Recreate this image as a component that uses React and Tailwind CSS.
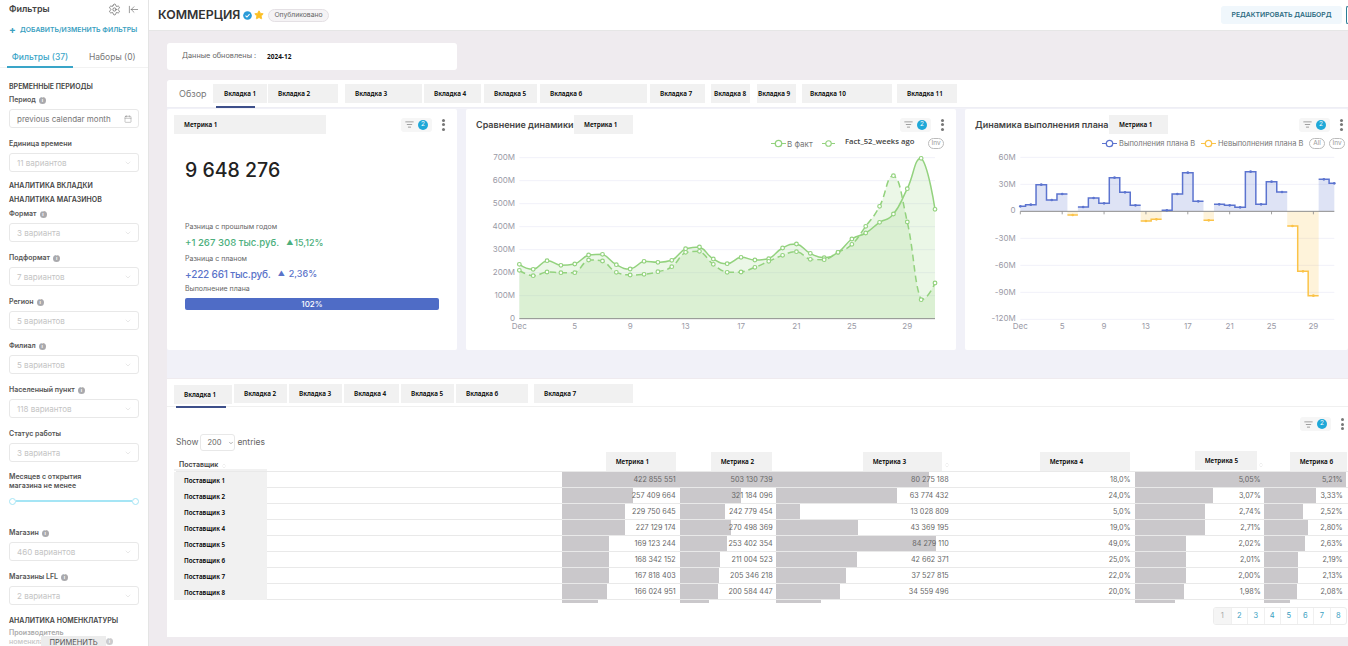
import React from "react";
import { Settings, ArrowLeftToLine, ListFilter, Calendar, ChevronDown, Star, ChevronsUpDown } from "lucide-react";

const Info = () => (
  <span className="inline-flex w-[7px] h-[7px] rounded-full bg-[#a9a9ad] text-white text-[5px] leading-none font-bold items-center justify-center ml-[3px] shrink-0">i</span>
);

const Label = ({ children, info = true }) => (
  <div className="h-[10px] mb-[4px] flex items-center text-[7px] font-semibold text-[#555]">{children}{info && <Info />}</div>
);

const Select = ({ text, mb = "mb-[11px]" }) => (
  <div className={`h-[19px] ${mb} border border-[#e8e8e8] rounded-[3px] flex items-center justify-between pl-[7px] pr-[6px] text-[8px] text-[#c4c4c4]`}>
    <span>{text}</span>
    <ChevronDown size={8} strokeWidth={1.2} color="#c8c8c8" />
  </div>
);

const Section = ({ children, className = "" }) => (
  <div className={`text-[7px] font-semibold text-[#444] ${className}`}>{children}</div>
);

const Chip = () => (
  <div className="w-[31px] h-[14px] rounded-[3px] bg-[#f6f6f6] flex items-center justify-center gap-[4px]">
    <ListFilter size={9} strokeWidth={1.6} color="#666" />
    <span className="w-[10px] h-[10px] rounded-full bg-[#1fa8d8] text-white text-[6.5px] flex items-center justify-center">2</span>
  </div>
);

const Kebab = () => (
  <div className="flex flex-col gap-[1.5px] w-[3px]">
    <span className="w-[3px] h-[3px] rounded-full bg-[#777]" />
    <span className="w-[3px] h-[3px] rounded-full bg-[#777]" />
    <span className="w-[3px] h-[3px] rounded-full bg-[#777]" />
  </div>
);

const Tag = ({ children, className = "" }) => (
  <div className={`h-[19px] pt-[1.5px] bg-[#f1f1f1] flex items-center text-[6.4px] font-semibold text-[#000] shrink-0 font-['Noto_Sans'] ${className}`}>{children}</div>
);

const Pill = ({ children, className = "" }) => (
  <span className={`h-[11px] w-[16px] rounded-full border border-[#bbb] text-[#999] text-[6.5px] flex items-center justify-center ${className}`}>{children}</span>
);

const Marker = ({ color, w = 15 }) => (
  <svg width={w} height="9" viewBox="0 0 15 9" className="shrink-0">
    <line x1="0" y1="4.5" x2="15" y2="4.5" stroke={color} strokeWidth="1.2" />
    <circle cx="7.5" cy="4.5" r="3.2" fill="#fff" stroke={color} strokeWidth="1.3" />
  </svg>
);

function clamp(v, a, b) {
  return Math.min(Math.max(a, b), Math.max(Math.min(a, b), v));
}

function smooth(pts) {
  const s = 0.5;
  const cps = pts.map((p, i) => {
    if (i === 0 || i === pts.length - 1) return { in: p, out: p };
    const prev = pts[i - 1], next = pts[i + 1];
    const dx = (next[0] - prev[0]) * s * 0.5;
    const dy = (next[1] - prev[1]) * s * 0.5;
    return {
      in: [p[0] - dx, clamp(p[1] - dy, prev[1], p[1])],
      out: [p[0] + dx, clamp(p[1] + dy, next[1], p[1])],
    };
  });
  let d = `M${pts[0][0]},${pts[0][1]}`;
  for (let i = 0; i < pts.length - 1; i++) {
    d += ` C${cps[i].out[0]},${cps[i].out[1]} ${cps[i + 1].in[0]},${cps[i + 1].in[1]} ${pts[i + 1][0]},${pts[i + 1][1]}`;
  }
  return d;
}

const factY = [478,493,467,481,477,450,448,479,492,469,472,466,431,426,462,476,457,465,461,429,417,445,458,442,402,384,352,327,251,160,313];
const prevY = [496,512,501,503,503,465,468,502,510,508,500,485,442,439,478,502,501,487,469,451,440,463,464,442,418,364,304,212,351,584,534];

const LineChart = () => {
  const x0 = 160, step = 1247 / 30, base = 641;
  const fact = factY.map((y, i) => [x0 + i * step, y]);
  const prev = prevY.map((y, i) => [x0 + i * step, y]);
  const close = ` L1407,${base} L160,${base} Z`;
  const ticks = [["700M",158],["600M",227],["500M",296],["400M",365],["300M",434],["200M",503],["100M",572],["0",641]];
  const xl = [["Dec",0],["5",4],["9",8],["13",12],["17",16],["21",20],["25",24],["29",28]];
  return (
    <svg width="490" height="185" viewBox="0 135 1470 555" className="block" fontFamily="Inter" fontSize="24" fill="#9a9aa6">
      {ticks.slice(0, 7).map(([t, y]) => <line key={t} x1="160" x2="1407" y1={y} y2={y} stroke="#f1f1f9" strokeWidth="3" />)}
      <path d={smooth(fact) + close} fill="#9bd585" fillOpacity="0.2" />
      <path d={smooth(prev) + close} fill="#9bd585" fillOpacity="0.2" />
      <line x1="160" x2="1407" y1={base} y2={base} stroke="#8d8d8d" strokeWidth="3" />
      <path d={smooth(fact)} fill="none" stroke="#93d27e" strokeWidth="4.5" />
      <path d={smooth(prev)} fill="none" stroke="#93d27e" strokeWidth="4.5" strokeDasharray="20 12" />
      {fact.map(([x, y], i) => <circle key={i} cx={x} cy={y} r="5.5" fill="#fff" stroke="#93d27e" strokeWidth="3.5" />)}
      {prev.map(([x, y], i) => <circle key={i} cx={x} cy={y} r="5.5" fill="#fff" stroke="#93d27e" strokeWidth="3.5" />)}
      {ticks.map(([t, y]) => <text key={t} x="147" y={y + 8} textAnchor="end">{t}</text>)}
      {xl.map(([t, i]) => <text key={t} x={x0 + i * step} y="673" textAnchor="middle">{t}</text>)}
    </svg>
  );
};

const stepVals = [
  ["b",304],["b",299],["b",239],["b",285],["b",267],["o",330],["b",306],["b",279],["b",295],["b",218],["b",262],["b",301],
  ["o",348],["o",343],["b",316],["b",267],["b",203],["b",289],["o",346],["b",298],["b",301],["b",307],["b",200],["b",298],
  ["b",230],["b",261],["o",363],["o",499],["o",572],["b",223],["b",235],
];

const StepChart = () => {
  const x0 = 166, step = 31.4, base = 319, right = 1108;
  const pts = stepVals.map(([s, y], i) => ({ s, y, x: x0 + i * step, a: Math.max(x0, x0 + (i - 0.5) * step), b: Math.min(right, x0 + (i + 0.5) * step) }));
  const paths = [];
  pts.forEach((p, i) => {
    if (i > 0 && pts[i - 1].s === p.s) {
      const last = paths[paths.length - 1];
      last.d += ` L${p.a},${p.y} L${p.b},${p.y}`;
      last.items.push(p);
    } else {
      paths.push({ s: p.s, d: `M${p.a},${p.y} L${p.b},${p.y}`, items: [p] });
    }
  });
  const col = { b: "#5c74cf", o: "#fbc348" };
  const grid = [["60M",157],["30M",238],["-30M",400],["-60M",481],["-90M",562],["-120M",643]];
  const xl = [["Dec",0],["5",4],["9",8],["13",12],["17",16],["21",20],["25",24],["29",28]];
  return (
    <svg width="383" height="185" viewBox="0 135 1149 555" className="block" fontFamily="Inter" fontSize="24" fill="#9a9aa6">
      {grid.map(([t, y]) => <line key={t} x1="166" x2={right} y1={y} y2={y} stroke="#f1f1f9" strokeWidth="3" />)}
      {paths.map((p, i) => {
        const f = p.items[0], l = p.items[p.items.length - 1];
        return <path key={i} d={`${p.d} L${l.b},${base} L${f.a},${base} Z`} fill={col[p.s]} fillOpacity="0.2" />;
      })}
      <line x1="166" x2={right} y1={base} y2={base} stroke="#8d8d8d" strokeWidth="3" />
      {xl.map(([t, i]) => <line key={t} x1={x0 + i * step} x2={x0 + i * step} y1={base} y2={base + 9} stroke="#8d8d8d" strokeWidth="2.5" />)}
      {paths.map((p, i) => <path key={i} d={p.d} fill="none" stroke={col[p.s]} strokeWidth="4.5" />)}
      {pts.map((p, i) => <circle key={i} cx={p.x} cy={p.y} r="4" fill={col[p.s]} />)}
      <text x="152" y="165" textAnchor="end">60M</text>
      <text x="152" y="246" textAnchor="end">30M</text>
      <text x="152" y="325" textAnchor="end">0</text>
      <text x="152" y="408" textAnchor="end">-30M</text>
      <text x="152" y="489" textAnchor="end">-60M</text>
      <text x="152" y="570" textAnchor="end">-90M</text>
      <text x="152" y="649" textAnchor="end">-120M</text>
      {xl.map(([t, i]) => <text key={t} x={x0 + i * step} y="673" textAnchor="middle">{t}</text>)}
    </svg>
  );
};

const topTabs = [
  ["Вкладка 2", "w-[70px] ml-[1px] pl-[10px]"],
  ["Вкладка 3", "w-[77px] ml-[7px] pl-[10px]"],
  ["Вкладка 4", "w-[57px] ml-[2px] pl-[10px]"],
  ["Вкладка 5", "w-[53px] ml-[3px] pl-[10px]"],
  ["Вкладка 6", "w-[107px] ml-[3px] pl-[10px]"],
  ["Вкладка 7", "w-[55px] ml-[3px] pl-[10px]"],
  ["Вкладка 8", "w-[39px] ml-[6px] pl-[3px]"],
  ["Вкладка 9", "w-[39px] ml-[7px] pl-[1px]"],
  ["Вкладка 10", "w-[90px] ml-[6px] pl-[8px]"],
  ["Вкладка 11", "w-[60px] ml-[5px] pl-[10px]"],
];

const bottomTabs = [
  ["Вкладка 2", "w-[53px] ml-[2px] pl-[10px]"],
  ["Вкладка 3", "w-[53px] ml-[2px] pl-[10px]"],
  ["Вкладка 4", "w-[55px] ml-[2px] pl-[10px]"],
  ["Вкладка 5", "w-[53px] ml-[2px] pl-[10px]"],
  ["Вкладка 6", "w-[72px] ml-[2px] pl-[10px]"],
  ["Вкладка 7", "w-[99px] ml-[6px] pl-[10px]"],
];

const cols = [
  { w: "w-[118px]", pr: "pr-[4px]" },
  { w: "w-[96px]", pr: "pr-[3px]" },
  { w: "w-[174px]", pr: "pr-[1px]" },
  { w: "w-[185px]", pr: "pr-[4px]" },
  { w: "w-[129px]", pr: "pr-[3px]" },
  { w: "w-[83px]", pr: "pr-[4px]" },
];

const rows = [
  ["Поставщик 1", ["422 855 551","503 130 739","80 275 188","18,0%","5,05%","5,21%"], [118,96,153,0,129,82]],
  ["Поставщик 2", ["257 409 664","321 184 096","63 774 432","24,0%","3,07%","3,33%"], [71,61,121,0,78,52]],
  ["Поставщик 3", ["229 750 645","242 779 454","13 028 809","5,0%","2,74%","2,52%"], [63,45,24,0,70,39]],
  ["Поставщик 4", ["227 129 174","270 498 369","43 369 195","19,0%","2,71%","2,80%"], [63,51,82,0,70,44]],
  ["Поставщик 5", ["169 123 244","253 402 354","84 279 110","49,0%","2,02%","2,63%"], [47,47,160,0,51,41]],
  ["Поставщик 6", ["168 342 152","211 004 523","42 662 371","25,0%","2,01%","2,19%"], [47,40,81,0,51,34]],
  ["Поставщик 7", ["167 818 403","205 346 218","37 527 815","22,0%","2,00%","2,13%"], [47,39,70,0,51,34]],
  ["Поставщик 8", ["166 024 951","200 584 447","34 559 496","20,0%","1,98%","2,08%"], [45,38,64,0,49,33]],
];
const partial = [36, 29, 45, 0, 40, 26];

const headers = [
  ["Метрика 1", "w-[70px] mr-[4px] mt-[1px]", false],
  ["Метрика 2", "w-[61px] mr-[4px] mt-[1px]", false],
  ["Метрика 3", "w-[79px] mr-[8px] mt-[1px]", true],
  ["Метрика 4", "w-[90px] mr-[5px] mt-[1px]", false],
  ["Метрика 5", "w-[62px] mr-[7px]", true],
  ["Метрика 6", "w-[57px] mr-0 mt-[1px]", false],
];

const Sort = ({ className = "" }) => <ChevronsUpDown size={6} strokeWidth={1.5} color="#d4d4d4" className={className} />;

export default function App() {
  return (
    <div className="w-[1348px] h-[646px] overflow-hidden flex bg-[#efebef] font-['Inter'] text-[#444]">
      {/* Sidebar */}
      <aside className="relative w-[149px] h-full shrink-0 bg-white border-r border-[#e4e4e4] overflow-hidden">
        <div className="h-[16px] pt-[2px] pl-[9px] pr-[9px] flex items-center justify-between">
          <span className="text-[9px] font-semibold text-[#444]">Фильтры</span>
          <span className="flex items-center gap-[7px] mt-[1px]">
            <Settings size={13} strokeWidth={1.4} color="#666" />
            <ArrowLeftToLine size={11} strokeWidth={1.4} color="#666" />
          </span>
        </div>
        <div className="mt-[8px] h-[12px] pl-[9px] flex items-center text-[6.8px] font-semibold text-[#3aa0bf]">
          <span className="text-[10px] font-bold w-[11px] leading-none -mt-[2px]">+</span>
          <span>ДОБАВИТЬ/ИЗМЕНИТЬ ФИЛЬТРЫ</span>
        </div>
        <div className="mt-[9px] h-[23px] border-b border-[#f2f2f2] flex text-[8.5px]">
          <div className="w-[66px] ml-[7px] text-center pt-[6px] border-b-2 border-[#3aa5c8] h-[23px] text-[#3aa5c8] font-medium">Фильтры (37)</div>
          <div className="ml-[16px] pt-[6px] text-[#777]">Наборы (0)</div>
        </div>
        <div className="px-[9px] pt-[14px]">
          <Section className="h-[10px] leading-[10px] mb-[3px]">ВРЕМЕННЫЕ ПЕРИОДЫ</Section>
          <Label>Период</Label>
          <div className="h-[19px] mb-[11px] border border-[#e8e8e8] rounded-[3px] flex items-center justify-between pl-[7px] pr-[6px] text-[8px] text-[#777]">
            <span>previous calendar month</span>
            <Calendar size={8} strokeWidth={1.2} color="#777" />
          </div>
          <Label info={false}>Единица времени</Label>
          <Select text="11 вариантов" />
          <Section className="h-[10px] leading-[10px] mb-[4px] mt-[-2px]">АНАЛИТИКА ВКЛАДКИ</Section>
          <Section className="h-[10px] leading-[10px] mb-[4px]">АНАЛИТИКА МАГАЗИНОВ</Section>
          <Label>Формат</Label>
          <Select text="3 варианта" />
          <Label>Подформат</Label>
          <Select text="7 вариантов" />
          <Label>Регион</Label>
          <Select text="5 вариантов" />
          <Label>Филиал</Label>
          <Select text="5 вариантов" />
          <Label>Населенный пункт</Label>
          <Select text="118 вариантов" />
          <Label info={false}>Статус работы</Label>
          <Select text="3 варианта" />
          <div className="-mt-[1px] text-[7px] leading-[9px] font-semibold text-[#555] mb-[7px]">Месяцев с открытия<br />магазина не менее</div>
          <div className="flex items-center h-[8px] mb-[23px]">
            <span className="w-[7px] h-[7px] rounded-full border border-[#a5e5f5] bg-white shrink-0" />
            <span className="flex-1 h-[2px] bg-[#a5e5f5]" />
            <span className="w-[7px] h-[7px] rounded-full border border-[#a5e5f5] bg-white shrink-0" />
          </div>
          <Label>Магазин</Label>
          <Select text="460 вариантов" />
          <Label>Магазины LFL</Label>
          <Select text="2 варианта" />
          <Section className="h-[10px] leading-[10px] mb-[2px]">АНАЛИТИКА НОМЕНКЛАТУРЫ</Section>
          <div className="text-[7px] leading-[9px] font-semibold text-[#aaa]">Производитель</div>
          <div className="w-[104px] text-[7px] leading-[9px] font-semibold text-[#ccc] flex items-center justify-between">номенклатуры<span className="opacity-60 flex"><Info /></span></div>
        </div>
        <div className="absolute left-[41px] top-[636px] w-[65px] h-[14px] bg-[#ececec] text-[7.5px] text-[#555] flex items-center justify-center">ПРИМЕНИТЬ</div>
      </aside>

      {/* Main */}
      <main className="flex-1 min-w-0 flex flex-col">
        <header className="h-[31px] shrink-0 bg-white border-b border-[#e6e6e6] flex items-center pl-[9px]">
          <h1 className="w-[81px] text-[12.3px] font-semibold text-[#333] leading-none whitespace-nowrap">КОММЕРЦИЯ</h1>
          <svg width="9" height="9" viewBox="0 0 10 10" className="ml-[4px]">
            <circle cx="5" cy="5" r="4.8" fill="#2a9bd8" />
            <path d="M2.8 5.1 L4.4 6.7 L7.3 3.6" fill="none" stroke="#fff" strokeWidth="1.2" />
          </svg>
          <Star size={10} fill="#fbbf24" color="#fbbf24" className="ml-[2px]" />
          <span className="ml-[4px] h-[13px] w-[61px] rounded-full border border-[#e4e0e4] bg-[#f5f3f5] text-[#666] text-[6.8px] flex items-center justify-center">Опубликовано</span>
          <div className="ml-auto flex items-center">
            <span className="w-[121px] h-[18px] rounded-[3px] bg-[#f0f7fc] text-[#2c6b82] text-[6.8px] font-semibold flex items-center justify-center">РЕДАКТИРОВАТЬ ДАШБОРД</span>
            <span className="ml-[4px] w-[2px] h-[18px] border-l border-y border-[#2c7d96] rounded-l-[3px]" />
          </div>
        </header>

        <div className="flex-1 min-h-0 pl-[18px]">
          <div className="mt-[12px] w-[290px] h-[27px] bg-white rounded-[3px] flex items-center pl-[15px]">
            <span className="text-[7.3px] text-[#666] w-[85px]">Данные обновлены :</span>
            <span className="text-[6.5px] font-bold text-[#111] font-['Noto_Sans']">2024-12</span>
          </div>

          <section className="mt-[10px] h-[298px] bg-[#f1f1f8] rounded-tl-[3px] overflow-hidden">
            <div className="h-[28px] bg-white border-b border-[#eeeef4] flex pl-[12px] pt-[4px]">
              <span className="w-[34px] text-[9px] text-[#777] h-[19px] flex items-center">Обзор</span>
              <Tag className="relative w-[54px] pl-[11px] overflow-visible">
                Вкладка 1
                <span className="absolute left-[3px] top-[22px] w-[39px] h-[2px] bg-[#3d4f8a]" />
              </Tag>
              {topTabs.map(([t, c]) => <Tag key={t} className={c}>{t}</Tag>)}
            </div>
            <div className="flex gap-[9px] pt-[1px] h-[242px]">
              {/* Card 1 */}
              <div className="w-[290px] h-[241px] bg-white rounded-[2px] shrink-0 pt-[6px] pl-[7px]">
                <div className="flex items-center h-[19px]">
                  <Tag className="w-[152px] pl-[10px]">Метрика 1</Tag>
                  <div className="ml-[75px]"><Chip /></div>
                  <div className="ml-[10px]"><Kebab /></div>
                </div>
                <div className="pl-[11px]">
                  <div className="mt-[23px] text-[19.5px] leading-[26px] font-medium text-[#222]">9 648 276</div>
                  <div className="mt-[39px] text-[7px] leading-[10px] text-[#666]">Разница с прошлым годом</div>
                  <div className="mt-[4px] text-[9.6px] leading-[14px] font-medium text-[#4caf7d] flex">
                    <span>+1 267 308 тыс.руб.</span><span className="ml-[7px] text-[7px] self-center">▲</span><span className="ml-[1px] text-[9px]">15,12%</span>
                  </div>
                  <div className="mt-[4px] text-[7px] leading-[10px] text-[#666]">Разница с планом</div>
                  <div className="mt-[3px] text-[10px] leading-[14px] font-medium text-[#5a73c9] flex">
                    <span className="tracking-[-0.2px]">+222 661 тыс.руб.</span><span className="ml-[7px] text-[7px] self-center">▲</span><span className="ml-[4px] text-[9px]">2,36%</span>
                  </div>
                  <div className="mt-[3px] text-[7px] leading-[10px] text-[#666]">Выполнение плана</div>
                  <div className="mt-[4px] w-[254px] h-[12px] rounded-[2px] bg-[#4f6cc6] text-white text-[8px] font-medium flex items-center justify-center">102%</div>
                </div>
              </div>
              {/* Card 2 */}
              <div className="w-[490px] h-[241px] bg-white rounded-[2px] shrink-0 pt-[6px]">
                <div className="flex items-center h-[19px] pl-[10px]">
                  <span className="w-[98px] text-[9px] font-semibold text-[#444] whitespace-nowrap">Сравнение динамики</span>
                  <Tag className="w-[59px] pl-[10px]">Метрика 1</Tag>
                  <div className="ml-[267px]"><Chip /></div>
                  <div className="ml-[10px]"><Kebab /></div>
                </div>
                <div className="mt-[3px] h-[13px] flex items-center text-[8px] text-[#777]">
                  <span className="ml-[305px]"><Marker color="#93d27e" /></span>
                  <span className="ml-[1px] w-[35px]">В факт</span>
                  <Marker color="#93d27e" w={13} />
                  <span className="ml-[10px] w-[83px] -mt-[3px] font-['Open_Sans'] text-[7.7px] font-semibold text-[#444] whitespace-nowrap">Fact_52_weeks ago</span>
                  <Pill>Inv</Pill>
                </div>
                <LineChart />
              </div>
              {/* Card 3 */}
              <div className="flex-1 min-w-0 h-[241px] bg-white rounded-[2px] pt-[6px]">
                <div className="flex items-center h-[19px] pl-[10px]">
                  <span className="w-[134px] text-[9px] font-semibold text-[#444] whitespace-nowrap">Динамика выполнения плана</span>
                  <Tag className="w-[59px] pl-[10px]">Метрика 1</Tag>
                  <div className="ml-[131px]"><Chip /></div>
                  <div className="ml-[10px]"><Kebab /></div>
                </div>
                <div className="mt-[3px] h-[13px] flex items-center text-[7.5px] text-[#777]">
                  <span className="ml-[137px]"><Marker color="#5c74cf" /></span>
                  <span className="ml-[2px] w-[82px] whitespace-nowrap">Выполнения плана В</span>
                  <Marker color="#fbc348" />
                  <span className="ml-[2px] w-[91px] whitespace-nowrap">Невыполнения плана В</span>
                  <Pill className="w-[14px]">All</Pill>
                  <Pill className="ml-[4px]">Inv</Pill>
                </div>
                <StepChart />
              </div>
            </div>
          </section>

          <section className="mt-[1px] h-[258px] bg-white pt-[5px]">
            <div className="h-[23px] pl-[7px] flex border-b border-[#f0f0f0]">
              <Tag className="relative w-[58px] pl-[10px] mt-[1px]">
                Вкладка 1
                <span className="absolute left-[2px] top-[21px] w-[50px] h-[2px] bg-[#3d4f8a]" />
              </Tag>
              {bottomTabs.map(([t, c]) => <Tag key={t} className={c}>{t}</Tag>)}
            </div>
            <div className="mt-[10px] h-[14px] pr-[4px] flex items-center justify-end">
              <Chip />
              <div className="ml-[10px]"><Kebab /></div>
            </div>
            <div className="ml-[9px]">
              <div className="mt-[3px] h-[17px] flex items-center text-[8.5px] text-[#666]">
                <span>Show</span>
                <span className="ml-[2px] w-[35px] h-[17px] border border-[#e8e8e8] rounded-[3px] flex items-center pl-[6px] gap-[7px] text-[7.5px]">200<ChevronDown size={6} strokeWidth={2} color="#666" /></span>
                <span className="ml-[2px]">entries</span>
              </div>
              {/* Table header */}
              <div className="relative h-[21px] flex border-b border-[#e9e9e9]">
                <div className="w-[385.7px] shrink-0 pl-[3px] pt-[9px] flex items-center h-[20px] text-[7px] font-semibold text-[#444]">Поставщик<Sort className="ml-[3px]" /></div>
                {headers.map(([t, c, s], i) => (
                  <div key={t} className={`${cols[i].w} shrink-0 relative flex justify-end`}>
                    <Tag className={`${c} pl-[10px]`}>{t}</Tag>
                    {s && <Sort className="absolute right-0 top-[11px]" />}
                  </div>
                ))}
                <span className="absolute left-[-2px] bottom-0 w-[93px] h-[2px] bg-[#f1f1f1]" />
              </div>
              {/* Table rows */}
              {rows.map(([name, vals, bars]) => (
                <div key={name} className="h-[16px] flex border-b border-[#e9e9e9]">
                  <div className="w-[385.7px] shrink-0 flex">
                    <div className="w-[93px] -ml-[2px] h-[16px] bg-[#f1f1f1] pl-[10px] pt-[1px] flex items-center text-[6.3px] font-semibold text-[#000] font-['Noto_Sans']">{name}</div>
                  </div>
                  {vals.map((v, i) => (
                    <div key={i} className={`${cols[i].w} ${cols[i].pr} pt-[1px] shrink-0 relative flex items-center justify-end text-[7.2px] text-[#666]`}>
                      <span className="absolute left-0 top-0 h-[15px] bg-[#cac8cb]" style={{ width: bars[i] }} />
                      <span className="relative">{v}</span>
                    </div>
                  ))}
                </div>
              ))}
              <div className="h-[3px] flex">
                <div className="w-[385.7px] shrink-0" />
                {partial.map((w, i) => (
                  <div key={i} className={`${cols[i].w} shrink-0`}>
                    <div className="h-[3px] bg-[#cac8cb]" style={{ width: w }} />
                  </div>
                ))}
              </div>
              <div className="mt-[4px] flex justify-end">
                <div className="flex h-[18px] border border-[#ececec] rounded-[3px] mr-[1px] text-[7.5px] text-[#3aa0bf] overflow-hidden">
                  {["1","2","3","4","5","6","7","8"].map((p, i) => (
                    <span key={p} className={`w-[16.5px] flex items-center justify-center ${i === 0 ? "bg-[#f5f5f5] text-[#aaa]" : "border-l border-[#f0f0f0]"}`}>{p}</span>
                  ))}
                </div>
              </div>
            </div>
          </section>
        </div>
      </main>
    </div>
  );
}
